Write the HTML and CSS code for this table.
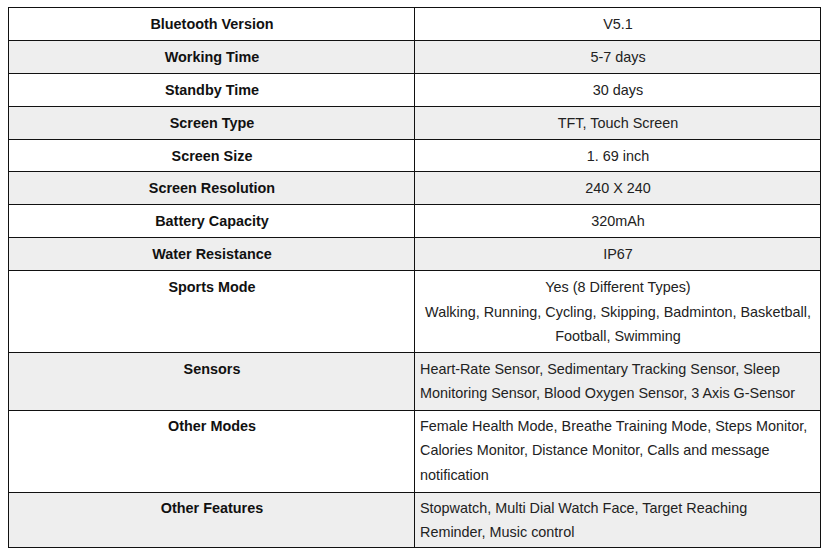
FILE: index.html
```html
<!DOCTYPE html>
<html>
<head>
<meta charset="utf-8">
<link rel="stylesheet" href="styles.css">
</head>
<body>
<table class="spec">
  <tbody>
    <tr><th>Bluetooth Version</th><td class="c">V5.1</td></tr>
    <tr><th>Working Time</th><td class="c">5-7 days</td></tr>
    <tr><th>Standby Time</th><td class="c">30 days</td></tr>
    <tr><th>Screen Type</th><td class="c">TFT, Touch Screen</td></tr>
    <tr><th>Screen Size</th><td class="c">1. 69 inch</td></tr>
    <tr><th>Screen Resolution</th><td class="c">240 X 240</td></tr>
    <tr><th>Battery Capacity</th><td class="c">320mAh</td></tr>
    <tr><th>Water Resistance</th><td class="c">IP67</td></tr>
    <tr class="r-sports"><th>Sports Mode</th><td class="c">Yes (8 Different Types)<br>Walking, Running, Cycling, Skipping, Badminton, Basketball, Football, Swimming</td></tr>
    <tr class="r-sensors"><th>Sensors</th><td>Heart-Rate Sensor, Sedimentary Tracking Sensor, Sleep Monitoring Sensor, Blood Oxygen Sensor, 3 Axis G-Sensor</td></tr>
    <tr class="r-modes"><th>Other Modes</th><td>Female Health Mode, Breathe Training Mode, Steps Monitor, Calories Monitor, Distance Monitor, Calls and message notification</td></tr>
    <tr class="r-features"><th>Other Features</th><td>Stopwatch, Multi Dial Watch Face, Target Reaching Reminder, Music control</td></tr>
  </tbody>
</table>
</body>
</html>
```
FILE: styles.css
```css
html, body {
  margin: 0;
  padding: 0;
  background: #fff;
}
body {
  padding: 7px 0 0 8px;
  font-family: "Liberation Sans", Arial, sans-serif;
  font-size: 14.4px;
  color: #222;
}
.spec {
  border-collapse: collapse;
  width: 813px;
  table-layout: fixed;
}
.spec th, .spec td {
  border: 1px solid #111;
  padding: 4px 4px 3.375px 5px;
  line-height: 24.5px;
  vertical-align: top;
  width: 50%;
}
.spec tr.r-sports th, .spec tr.r-sports td {
  padding-bottom: 3px;
}
.spec tr.r-sensors th, .spec tr.r-sensors td {
  padding-bottom: 4px;
}
.spec tr.r-modes th, .spec tr.r-modes td {
  padding-top: 3px;
  padding-bottom: 4.5px;
}
.spec tr.r-features th, .spec tr.r-features td {
  padding-top: 3px;
  padding-bottom: 2px;
}
.spec th {
  font-weight: bold;
  color: #111;
  text-align: center;
}
.spec td {
  text-align: left;
}
.spec td.c {
  text-align: center;
}
.spec tr:nth-child(even) th,
.spec tr:nth-child(even) td {
  background: #eeeeee;
}
```
